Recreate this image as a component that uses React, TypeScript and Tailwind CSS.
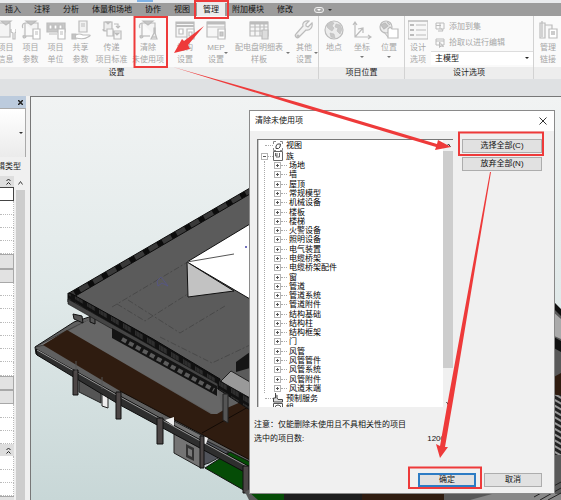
import type { ReactNode } from 'react';
import { useState } from 'react';
import { clsx } from 'clsx';

type RibbonItemProps = {
  lines: string[];
  className: string;
  icon: ReactNode;
  menu?: 'side' | 'below';
};

type PropertyRow = 'input' | 'plain' | 'button' | 'header';

const tabs = ['插入', '注释', '分析', '体量和场地', '协作', '视图', '管理', '附加模块', '修改'];

const families = [
  '场地',
  '墙',
  '屋顶',
  '常规模型',
  '机械设备',
  '楼板',
  '楼梯',
  '火警设备',
  '照明设备',
  '电气装置',
  '电缆桥架',
  '电缆桥架配件',
  '窗',
  '管道',
  '管道系统',
  '管道附件',
  '结构基础',
  '结构柱',
  '结构框架',
  '门',
  '风管',
  '风管管件',
  '风管系统',
  '风管附件',
  '风道末端'
];

const propertyRows: PropertyRow[] = [
  'input',
  'plain',
  'plain',
  'plain',
  'plain',
  'button',
  'button',
  'plain',
  'plain',
  'plain',
  'plain',
  'plain',
  'plain',
  'plain',
  'button',
  'button',
  'plain',
  'plain',
  'plain',
  'header',
  'plain',
  'plain',
  'plain'
];

function Icon({ children, className = 'h-5 w-5' }: { children: ReactNode; className?: string }) {
  return (
    <svg
      viewBox="0 0 20 20"
      className={clsx('shrink-0', className)}
      fill="none"
      stroke="#bcbcbc"
      strokeWidth="1.2"
      aria-hidden="true"
    >
      {children}
    </svg>
  );
}

function Caret({ className = 'fill-[#777]' }: { className?: string }) {
  return (
    <svg viewBox="0 0 4 2" className={clsx('h-[2px] w-1 shrink-0', className)} aria-hidden="true">
      <path d="M0 0h4L2 2z" />
    </svg>
  );
}

const sheetWithBook = (
  <>
    <path d="M4 3h13v13M4 3v13H1.500M4 3C1 3 1 7 2 8M2 16c0 3 3 2 3 0" fill="#f4f4f4" />
    <path d="M5 1h10l-5 4z" fill="#c6c6c6" />
    <path d="M2 16h10" />
  </>
);

const icons = {
  info: (
    <Icon>
      <path d="M4 3h10v14H2V3z" fill="#f4f4f4" />
      <path d="M5 1h10l-5 4z" fill="#c6c6c6" />
      <path d="M15 9v3l2 1v6h2v-6l1-1V9" fill="#fff" />
    </Icon>
  ),
  params: (
    <Icon>
      {sheetWithBook}
      <path d="M12 9h7v10h-7z" fill="#fff" />
      <path d="M14 12h3M14 14h3" />
    </Icon>
  ),
  units: (
    <Icon>
      <path d="M1 3h18v9H1z" fill="#c8c8c8" />
      <path d="M3 5h3v4H3zM8 5h3v4H8zM13 5h3v4h-3z" fill="#fff" />
      <path d="M12 9h7v10h-7z" fill="#fff" />
      <path d="M14 12h3M14 14h3M3 14h8" />
    </Icon>
  ),
  shared: (
    <Icon>
      <path d="M8 1h8v11H8z" fill="#f2f2f2" />
      <path d="M10 4h4M10 6h4" />
      <path d="M1 14h4v5H1z" fill="#c4c4c4" />
      <path d="M5 15c3-2 5-1 7 0h6c2 0 1 1-1 2-3 2-8 2-12 1" fill="#fff" />
    </Icon>
  ),
  transfer: (
    <Icon>
      <path d="M2 2h8v9H2zM1 9c0 3 2 2 2 1" fill="#eee" />
      <path d="M4 2h4L6 4z" fill="#c4c4c4" />
      <path d="M12 4h4v4m-2-2 2 2 2-2" />
      <path d="M5 9h6v7H5zM12 11h7v8h-7z" fill="#f7f7f7" />
      <path d="M13 13h4l-2 2z" fill="#c4c4c4" />
    </Icon>
  ),
  purge: (
    <Icon>
      {sheetWithBook}
      <path d="M16 8v5l-3 6h6l-2-6V8z" fill="#eee" />
      <path d="M14 17h4" />
    </Icon>
  ),
  structure: (
    <Icon>
      <path d="M1 2h18v15H1z" fill="#f6f6f6" />
      <path d="M1 3h18M1 6h18" strokeWidth="2" />
      <path d="M4 9h4v5H4zM12 9h7v10h-7z" fill="#fff" />
      <path d="M14 12h3v4h-3z" />
    </Icon>
  ),
  mep: (
    <Icon>
      <path d="M1 2h18v15H1z" fill="#f6f6f6" />
      <path d="M1 3h18" strokeWidth="3" />
      <path d="M1 7h18M12 9h7v10h-7z" fill="#fff" />
      <path d="M14 12h3v4h-3z" fill="#ccc" />
    </Icon>
  ),
  schedule: (
    <Icon>
      <path d="M1 2h18v14H1z" fill="#f6f6f6" />
      <path d="M1 3h18" strokeWidth="3" />
      <path d="M1 7h18M1 11h18M6 3v13M11 3v13M15 3v13" />
      <path d="M13 10h6v9h-6z" fill="#ddd" />
    </Icon>
  ),
  wrench: (
    <Icon>
      <path d="M18 3l-4 4-2-1V4l3-3c-4-1-7 2-6 5l-7 8c-2 2 1 5 3 3l7-7c4 1 7-3 6-7z" fill="#f2f2f2" />
      <circle cx="4" cy="16" r="1" />
    </Icon>
  ),
  globe: (
    <Icon>
      <circle cx="10" cy="10" r="9" fill="#ececec" />
      <path
        d="M3 5l4-3 3 1-2 3 2 2-2 3-3-2-2-2zM12 4l4 1 2 4-2 5-3-3 1-3-3-1zM6 13l4 1 1 4-4-1z"
        fill="#c8c8c8"
        strokeWidth=".6"
      />
    </Icon>
  ),
  axes: (
    <Icon>
      <path d="M3 2v15h16M1 5l2-3 2 3M16 15l3 2-3 2M3 17l8-9M11 13V8l-5 1" />
    </Icon>
  ),
  position: (
    <Icon>
      <circle cx="7" cy="7" r="6" fill="#ededed" />
      <path d="M2 5l4-2 3 3-4 3zM8 2l3 3" fill="#c4c4c4" />
      <path d="M9 9l2-2 2 2h6v9H9z" fill="#fff" />
      <path d="M5 12l4 5" />
    </Icon>
  ),
  options: (
    <Icon>
      <path d="M0 1h20v18H0z" fill="#f7f7f7" />
      <path d="M2 5h4M2 10h4M2 15h4" strokeWidth="2" />
      <path d="M8 5h10M8 10h10M8 15h10M0 1h20" />
    </Icon>
  ),
  links: (
    <Icon>
      <path d="M2 3h5v15H2zM4 1v16M7 5h7v4" fill="#f4f4f4" />
      <path d="M11 9h8v9h-8z" fill="#fff" />
      <path d="M13 12h4M13 14h4" strokeWidth="1.500" />
    </Icon>
  )
};

function RibbonItem({ lines, className, icon, menu }: RibbonItemProps) {
  return (
    <button
      type="button"
      className={clsx(
        'relative flex shrink-0 flex-col items-center whitespace-nowrap pt-1 leading-3 text-[#a6a6a6]',
        className
      )}
    >
      {icon}
      <span className="mt-[2px] flex flex-col items-center">
        {lines.map((line) => (
          <span key={line}>{line}</span>
        ))}
      </span>
      {menu === 'below' ? <Caret className="mt-[2px] fill-[#777]" /> : null}
      {menu === 'side' ? (
        <span className="absolute right-0 top-9">
          <Caret />
        </span>
      ) : null}
    </button>
  );
}

type RibbonGroupProps = {
  label: string;
  className?: string;
  labelClassName?: string;
  children: ReactNode;
};

function RibbonGroup({ label, className, labelClassName, children }: RibbonGroupProps) {
  return (
    <section className={clsx('flex shrink-0 flex-col border-r border-[#d2d2d2]', className)}>
      <div className="flex h-[51px]">{children}</div>
      <h2 className={clsx('h-3 bg-[#ededed] text-center leading-3 text-[#222]', labelClassName)}>{label}</h2>
    </section>
  );
}

function Ribbon() {
  return (
    <header className="overflow-hidden">
      <div className="flex h-[3px] bg-[#e9ebed] pl-[137px]">
        <span className="h-[2px] w-4 bg-[#7fb2e6]" />
      </div>
      <nav className="flex h-[13px] items-stretch bg-[#9c9c9c] pl-[5px] text-[#111]">
        {tabs.map((tab) => (
          <button
            key={tab}
            type="button"
            className={clsx(
              'mr-[13px] shrink-0 whitespace-nowrap leading-[14px]',
              tab === '管理' && '-ml-[6px] mr-[7px]! bg-[#ececec] px-[6px]'
            )}
          >
            {tab}
          </button>
        ))}
        <button type="button" aria-label="显示选项" className="ml-2 flex items-center gap-1">
          <span className="flex h-[6px] w-[10px] items-center justify-center rounded-sm border border-[#eee] bg-[#aaa]">
            <Caret className="fill-white" />
          </span>
          <Caret className="fill-[#333]" />
        </button>
      </nav>

      <div className="flex bg-[#fafafa]">
        <RibbonGroup label="设置" className="w-[319px]" labelClassName="pr-[85px]">
          <div className="-ml-[7px] flex">
            <RibbonItem lines={['项目', '信息']} className="w-[25px]" icon={icons.info} />
            <RibbonItem lines={['项目', '参数']} className="w-[25px]" icon={icons.params} />
            <RibbonItem lines={['项目', '单位']} className="w-[25px]" icon={icons.units} />
            <RibbonItem lines={['共享', '参数']} className="w-[25px]" icon={icons.shared} />
            <RibbonItem lines={['传递', '项目标准']} className="w-[37px]" icon={icons.transfer} />
            <RibbonItem lines={['清除', '未使用项']} className="w-9" icon={icons.purge} />
            <RibbonItem lines={['结构', '设置']} className="w-[38px]" icon={icons.structure} />
            <RibbonItem lines={['MEP', '设置']} className="w-6" icon={icons.mep} menu="side" />
            <RibbonItem lines={['配电盘明细表', '样板']} className="w-[62px]" icon={icons.schedule} menu="side" />
            <RibbonItem lines={['其他', '设置']} className="w-7" icon={icons.wrench} menu="side" />
          </div>
        </RibbonGroup>

        <RibbonGroup label="项目位置" className="w-[86px]">
          <RibbonItem lines={['地点']} className="w-[30px]" icon={icons.globe} />
          <RibbonItem lines={['坐标']} className="w-[26px]" icon={icons.axes} menu="below" />
          <RibbonItem lines={['位置']} className="w-7" icon={icons.position} menu="below" />
        </RibbonGroup>

        <RibbonGroup label="设计选项" className="w-[129px]">
          <RibbonItem lines={['设计', '选项']} className="w-[26px]" icon={icons.options} />
          <div className="flex flex-1 flex-col pt-[3px] text-[#a6a6a6]">
            <button type="button" className="flex h-4 items-center gap-1 pl-1">
              <Icon className="h-[10px] w-[10px]">
                <path d="M2 2h16v12H2zM2 7h10M10 2v12M6 18h10l-3-5" strokeWidth="2" />
              </Icon>
              添加到集
            </button>
            <button type="button" className="flex h-4 items-center gap-1 pl-1">
              <Icon className="h-[10px] w-[10px]">
                <path d="M2 2h16v12H2zM2 6h16M9 8v11l3-3 5 1z" strokeWidth="2" />
              </Icon>
              拾取以进行编辑
            </button>
            <div className="relative flex h-[14px] items-center">
              <select
                aria-label="设计选项"
                className="h-full w-full appearance-none border-t border-[#ddd] bg-white pl-1 leading-3 text-[#111]"
              >
                <option>主模型</option>
              </select>
              <span className="pointer-events-none absolute right-1 flex">
                <Caret className="fill-[#222]" />
              </span>
            </div>
          </div>
        </RibbonGroup>

        <section className="flex flex-1 flex-col">
          <div className="flex h-[51px]">
            <RibbonItem lines={['管理', '链接']} className="w-7" icon={icons.links} />
          </div>
          <div className="h-3 bg-[#ededed]" />
        </section>
      </div>
    </header>
  );
}

function DoubleChevron() {
  return (
    <svg viewBox="0 0 5 7" className="h-[7px] w-[5px]" fill="none" stroke="#222" aria-hidden="true">
      <path d="M.5 3l2-2 2 2M.5 6.500l2-2 2 2" />
    </svg>
  );
}

function PropertiesPanel() {
  return (
    <aside className="flex w-[30px] shrink-0 flex-col overflow-hidden bg-[#f0f0f0]">
      <div className="flex h-3 w-[26px] items-center justify-end bg-[#bccbdd] pr-[3px]">
        <button type="button" aria-label="关闭属性">
          <svg viewBox="0 0 5 5" className="h-[5px] w-[5px]" stroke="#222" strokeWidth="1.500" aria-hidden="true">
            <path d="M0 0l5 5M5 0L0 5" />
          </svg>
        </button>
      </div>
      <button
        type="button"
        aria-label="类型选择器"
        className="flex h-[49px] w-[26px] items-center justify-end border-r border-t border-[#aaa] bg-linear-to-b from-white to-[#ebebeb] pr-[2px]"
      >
        <Caret className="fill-[#333]" />
      </button>
      <button
        type="button"
        className="flex h-[19px] w-[21px] items-center justify-end whitespace-nowrap text-[#222]"
      >
        编辑类型
      </button>
      <div className="flex flex-1">
        <div className="flex w-[14px] flex-col">
          <div className="flex h-[11px] items-center justify-end bg-[#dedede] pr-[3px]">
            <DoubleChevron />
          </div>
          {propertyRows.map((row, index) => {
            if (row === 'input') {
              return (
                <input
                  key={index}
                  aria-label="属性值"
                  className="min-h-0 w-full flex-1 border border-l-0 border-[#444] bg-white"
                />
              );
            }

            if (row === 'button') {
              return (
                <button
                  key={index}
                  type="button"
                  aria-label="编辑"
                  className="flex-1 border border-l-0 border-[#a8a8a8] bg-[#e2e2e2]"
                />
              );
            }

            return (
              <div
                key={index}
                className={clsx(
                  'flex flex-1 items-center justify-end pr-[3px]',
                  row === 'header' ? 'bg-[#dedede]' : 'border-b border-r border-dotted border-[#bbb] bg-white'
                )}
              >
                {row === 'header' ? <DoubleChevron /> : null}
              </div>
            );
          })}
          <div className="h-1 border-t border-[#a8a8a8] bg-[#e2e2e2]" />
        </div>
        <div className="ml-[2px] flex w-[9px] flex-col">
          <div className="flex h-[14px] items-center justify-center">
            <svg viewBox="0 0 5 4" className="h-1 w-[5px]" fill="none" stroke="#444" aria-hidden="true">
              <path d="M.5 3.500l2-3 2 3" />
            </svg>
          </div>
          <div className="flex-1 bg-[#cdcdcd]" />
        </div>
      </div>
    </aside>
  );
}

function Model() {
  return (
    <svg
      viewBox="31 97 530 403"
      preserveAspectRatio="xMinYMin slice"
      className="h-full w-full"
      role="img"
      aria-label="三维模型"
    >
      <defs>
        <pattern id="rail" width="16" height="8" patternUnits="userSpaceOnUse" patternTransform="rotate(-30)">
          <rect width="16" height="8" fill="#0c0c0c" />
          <path d="M5 0v8M7 0v8M9 0v8M11 0v8M13 0v8" stroke="#7c7c7c" strokeWidth=".8" />
        </pattern>
        <pattern id="railFront" width="12" height="8" patternUnits="userSpaceOnUse" patternTransform="skewY(31)">
          <rect width="12" height="8" fill="#111" />
          <path d="M4 1v5M6 1v5M8 1v5M10 1v5" stroke="#555" strokeWidth=".8" />
        </pattern>
        <pattern id="steps" width="8" height="5" patternUnits="userSpaceOnUse" patternTransform="rotate(30)">
          <rect width="8" height="5" fill="#999" />
          <rect width="8" height="3" fill="#222" />
        </pattern>
      </defs>

      {/* lower terrace */}
      <path d="M35 347 74 322 92 316 250 395V475L36 354z" fill="#606060" stroke="#111" />
      <path d="M35 347 78 325 90 320 68 331 44 345z" fill="#7b7b7b" stroke="#222" strokeWidth=".6" />
      <path d="M68 331 94 317 217 380 222 412 215 415z" fill="#666" />
      <path d="M43 345 67 330 211 414 217 414 227 408 250 398V460L120 391z" fill="#2f1c10" />
      <path d="M120 391 250 460M202 433l48-27" stroke="#120a05" fill="none" />
      <path d="M73 314l9 2 1 7-9-4zM90 313h5v11l-5-2z" fill="#555" stroke="#111" />

      {/* rooms under the terrace */}
      <path d="M79 378l22 11v14l-22-11z" fill="#555" stroke="#222" />
      <path d="M102 388l6 3v17l-6-2z" fill="#eee" stroke="#222" />
      <path d="M174 421l27 14v33l-27-15z" fill="#747474" stroke="#222" />
      <path d="M186 444l8 4v13l-8-4z" fill="#333" />
      <path d="M188 448l4 2v7l-4-2z" fill="#777" />
      <path d="M205 468l25-16 20 10v38h11z" fill="#054c06" stroke="#111" />
      <path d="M203 439l26 13-20 11-6 2z" fill="#50535a" stroke="#222" />

      {/* edge beam and columns */}
      <path d="M36 349 120 396 250 467V475L120 405 37 355z" fill="#2e2e2e" stroke="#0d0d0d" />
      <path d="M37 350 120 397 250 468" stroke="#999" fill="none" />
      <path d="M165 420l9-3v9zM203 436l5 2-2 6-3-1z" fill="#eee" />
      <path
        d="M73 370h5v25h-5zM116 392h5v27h-5zM157 418h6v26h-6zM200 436h4v32h-4zM243 466h6v27h-6z"
        fill="#4c4646"
        stroke="#111"
      />
      <path d="M76 361v12M102 377v12" stroke="#555" />

      {/* main roof */}
      <path d="M69 295 250 190V400L217 383z" fill="#5b5b5b" />
      <path d="M69 293 250 188V194L72 298z" fill="url(#rail)" stroke="#0c0c0c" />
      <path d="M68 293 72 294 153 339 220 379V388L68 302z" fill="url(#railFront)" stroke="#080808" />
      <path d="M68 299 220 385V390L68 304z" fill="#444" stroke="#111" strokeWidth=".6" />
      <path d="M112 328 217 386V396L112 338z" fill="#141414" />
      <path d="M122 339 214 390" stroke="#5c5c5c" strokeWidth="4" strokeDasharray="5 3" fill="none" />
      <path d="M221 381l10-10 19 11v25z" fill="#999" stroke="#222" />
      <path d="M236 362l14-10v16l-14 4z" fill="#151515" />
      <path d="M218 380 250 398V410L218 389z" fill="url(#railFront)" stroke="#111" />
      <path d="M223 394h5v29l-5-3z" fill="#555" stroke="#222" />
      <path
        d="M112 307l74-44M117 304l28 17 49-31M128 300l52 33 45-27M160 337l52 26 38-18"
        stroke="#444"
        strokeDasharray="6 2 2 2"
        strokeWidth=".8"
        fill="none"
      />
      <path d="M157 281l4-4 7 9-6-3-4 3z" fill="none" stroke="#55558c" strokeWidth=".8" />

      {/* skylight */}
      <path d="M187 262 250 224V299z" fill="#fff" stroke="#111" />
      <path d="M187 262 234 291 188 297z" fill="#c2c2c2" stroke="#111" />
      <path d="M187 262l47-8" stroke="#555" />
      <circle cx="246" cy="247" r="1" fill="#44a" />

      {/* parts that show past the dialog */}
      <path d="M552 300l9 10v190H249l-4-8z" fill="#595959" />
      <path d="M552 300l9 9v7l-9-9zM552 336l9 5v11l-9-5z" fill="#111" />
      <path d="M552 311l9 8v20l-9-4z" fill="#aaa" />
      <path d="M552 378l9-5v24l-9-4z" fill="#2f1c10" />
      <path d="M552 395h9v60h-9z" fill="url(#steps)" />
      <path d="M249 492h38v8h-29z" fill="#054c06" />
      <path d="M284 492h80v8h-80z" fill="#1d1d1d" />
      <path d="M362 492h82v8h-82z" fill="#2f1c10" />
      <path d="M470 500l22-6h69v6z" fill="#888" />
      <path d="M540 500l21-12M548 500l13-7M534 497l27-15" stroke="#222" />
    </svg>
  );
}

function Toggle({ expanded, label, onClick }: { expanded: boolean; label: string; onClick?: () => void }) {
  return (
    <button
      type="button"
      aria-label={label}
      aria-expanded={expanded}
      onClick={onClick}
      className="flex h-[7px] w-[7px] shrink-0 items-center justify-center border border-[#b4b4b4] bg-white"
    >
      <svg viewBox="0 0 5 5" className="h-[5px] w-[5px]" stroke="#555" aria-hidden="true">
        <path d={expanded ? 'M1 2.500h3' : 'M1 2.500h3M2.500 1v3'} />
      </svg>
    </button>
  );
}

function PurgeTree() {
  const [expanded, setExpanded] = useState(true);

  return (
    <div className="flex h-[268px] w-[196px] border-l border-t border-[#777] bg-white text-black">
      <ul className="flex min-w-0 flex-1 flex-col overflow-hidden whitespace-nowrap border-l border-[#ccc] pl-[2px] leading-[9px]">
        <li className="flex h-[11px] shrink-0 items-center pl-1">
          <span className="w-2 border-t border-dotted border-[#aaa]" />
          <svg viewBox="0 0 10 10" className="mr-[3px] h-[10px] w-[10px]" fill="none" stroke="#444" aria-hidden="true">
            <path d="M.5 3v-2.500h2.500M7 .5h2.500v2.500M9.500 7v2.500H7M3 9.500H.5V7" stroke="#888" />
            <path d="M3 5l1.500-2h3l-.5 3-1.500 1.500H3z" />
          </svg>
          视图
        </li>
        <li className="flex min-h-0 flex-1 flex-col">
          <div className="flex h-[10px] shrink-0 items-center">
            <Toggle expanded={expanded} label="族" onClick={() => setExpanded((current) => !current)} />
            <span className="w-[5px] border-t border-dotted border-[#aaa]" />
            <svg
              viewBox="0 0 10 10"
              className="mr-[3px] h-[10px] w-[10px]"
              fill="none"
              stroke="#666"
              aria-hidden="true"
            >
              <path d="M.5.5h9v9h-9z" />
              <path d="M2.500 2v3H4V2M6.500 2v4H3" />
            </svg>
            族
          </div>
          {expanded ? (
            <ul className="ml-[3px] flex min-h-0 flex-1 flex-col border-l border-dotted border-[#aaa] pl-[9px]">
              {families.map((family) => (
                <li key={family} className="flex min-h-0 flex-1 items-center">
                  <Toggle expanded={false} label={family} />
                  <span className="mr-[2px] w-[6px] border-t border-dotted border-[#aaa]" />
                  {family}
                </li>
              ))}
            </ul>
          ) : null}
        </li>
        <li className="flex h-[10px] shrink-0 items-center pl-1">
          <span className="w-2 border-t border-dotted border-[#aaa]" />
          <svg viewBox="0 0 10 10" className="mr-[3px] h-[10px] w-[10px]" fill="#ddd" stroke="#444" aria-hidden="true">
            <path d="M2.500 0v5h-2v4h9V6.500H5L4 5V2" />
          </svg>
          预制服务
        </li>
        <li className="flex h-1 shrink-0 items-start overflow-hidden pl-3">
          <svg
            viewBox="0 0 10 10"
            className="mr-[3px] h-[10px] w-[10px] shrink-0"
            fill="none"
            stroke="#555"
            aria-hidden="true"
          >
            <path d="M.5.5h9v9h-9z" />
            <circle cx="5" cy="5" r="3" />
          </svg>
          组
        </li>
      </ul>
      <div className="flex w-[10px] shrink-0 flex-col items-center bg-[#f0f0f0]">
        <svg viewBox="0 0 5 11" className="h-[11px] w-[5px]" fill="none" stroke="#333" aria-hidden="true">
          <path d="M.5 7l2-3 2 3" />
        </svg>
        <div className="h-[217px] w-full bg-[#cdcdcd]" />
        <svg viewBox="0 0 5 11" className="mt-auto h-[11px] w-[5px]" fill="none" stroke="#333" aria-hidden="true">
          <path d="M.5 6l2 3 2-3" />
        </svg>
      </div>
    </div>
  );
}

function DialogButton({ children, primary, className }: { children: ReactNode; primary?: boolean; className: string }) {
  return (
    <button
      type="button"
      className={clsx(
        'flex h-[14px] items-center justify-center bg-[#e1e1e1] leading-3',
        primary ? 'border-2 border-[#2d7cc4]' : 'border border-[#adadad]',
        className
      )}
    >
      {children}
    </button>
  );
}

function PurgeDialog() {
  return (
    <div
      role="dialog"
      aria-labelledby="purge-title"
      className="absolute left-[249px] top-[110px] flex w-[306px] flex-col border border-[#8a8a8a] bg-[#f0f0f0] text-[#111]"
    >
      <div className="flex h-5 items-center justify-between bg-white pl-[5px] pr-[7px]">
        <h1 id="purge-title">清除未使用项</h1>
        <button type="button" aria-label="关闭">
          <svg viewBox="0 0 8 8" className="h-2 w-2" stroke="#333" aria-hidden="true">
            <path d="M.5.5l7 7M7.500.5l-7 7" />
          </svg>
        </button>
      </div>
      <div className="flex justify-between pl-[7px] pr-3 pt-2">
        <PurgeTree />
        <div className="flex flex-col gap-1">
          <DialogButton className="w-20">选择全部(C)</DialogButton>
          <DialogButton className="w-20">放弃全部(N)</DialogButton>
        </div>
      </div>
      <div className="flex flex-col gap-[2px] pl-1 pt-3 leading-3">
        <p>注意：仅能删除未使用且不具相关性的项目</p>
        <p className="flex w-[191px] justify-between">
          <span>选中的项目数:</span>
          <span>1200</span>
        </p>
      </div>
      <div className="flex justify-end gap-2 pb-[6px] pr-3 pt-7">
        <DialogButton primary className="w-[58px]">
          确定
        </DialogButton>
        <DialogButton className="w-[58px]">取消</DialogButton>
      </div>
    </div>
  );
}

function Annotations() {
  return (
    <svg
      viewBox="0 0 561 500"
      className="pointer-events-none absolute left-0 top-0 h-[500px] w-[561px]"
      fill="#ee3a3a"
      aria-hidden="true"
    >
      <g fill="none" stroke="#ee3a3a" strokeWidth="2">
        <path d="M195 1h33v17h-33zM134.500 17h32.500v50h-32.500zM459 132.500h84v22.500h-84zM409 467.500h72v20.500h-72z" />
      </g>
      <path d="M204 26 188 45 190 49 174 53 182 39 184 41z" />
      <path d="M173 67 300 103 437 144 438 140 451 147 435 150 436 147 299 106z" />
      <path d="M490 172 491 172 454 395 445 447 448 447 440 458 436 444 440 446 449 395z" />
    </svg>
  );
}

export default function App() {
  return (
    <div
      lang="zh-CN"
      className="relative flex min-h-screen flex-col overflow-hidden bg-[#dfe1e3] font-['Liberation_Sans','Noto_Sans_CJK_SC',sans-serif] text-[8px]"
    >
      <Ribbon />
      <div className="mt-[17px] flex flex-1">
        <PropertiesPanel />
        <main className="relative flex-1 overflow-hidden border-l border-t border-[#777] bg-linear-to-b from-[#f1f3f3] via-[#e0e9e9] to-[#c8d7d7]">
          <div className="absolute inset-0">
            <Model />
          </div>
        </main>
      </div>
      <PurgeDialog />
      <Annotations />
    </div>
  );
}
